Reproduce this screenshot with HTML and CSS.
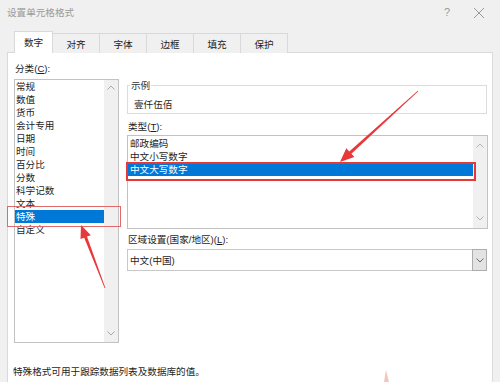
FILE: index.html
```html
<!DOCTYPE html>
<html lang="zh-CN">
<head>
<meta charset="utf-8">
<title>设置单元格格式</title>
<link rel="stylesheet" href="styles.css">
</head>
<body>
<div class="dialog">
  <div class="titlebar">
    <span class="title">设置单元格格式</span>
    <span class="tb-btns">
      <span class="help">?</span>
      <svg class="close" width="12" height="12" viewBox="0 0 12 12"><path d="M1 1L11 11M11 1L1 11" stroke="#9a9a9a" stroke-width="1" fill="none"/></svg>
    </span>
  </div>

  <div class="tabs">
    <div class="tab active">数字</div>
    <div class="tab">对齐</div>
    <div class="tab">字体</div>
    <div class="tab">边框</div>
    <div class="tab">填充</div>
    <div class="tab">保护</div>
  </div>

  <div class="panel">
    <div class="main">
      <div class="left">
        <div class="label">分类(<u>C</u>):</div>
        <div class="listbox cat-list">
          <ul class="items">
            <li>常规</li>
            <li>数值</li>
            <li>货币</li>
            <li>会计专用</li>
            <li>日期</li>
            <li>时间</li>
            <li>百分比</li>
            <li>分数</li>
            <li>科学记数</li>
            <li>文本</li>
            <li class="sel">特殊</li>
            <li>自定义</li>
          </ul>
          <div class="vscroll">
            <svg width="8" height="5" viewBox="0 0 8 5"><path d="M0.5 4.5L4 1L7.5 4.5" stroke="#a8a8a8" fill="none"/></svg>
            <svg width="8" height="5" viewBox="0 0 8 5"><path d="M0.5 0.5L4 4L7.5 0.5" stroke="#a8a8a8" fill="none"/></svg>
          </div>
        </div>
      </div>

      <div class="right">
        <fieldset class="sample">
          <legend>示例</legend>
          <div class="sample-val">壹仟伍佰</div>
        </fieldset>

        <div class="label type-label">类型(<u>T</u>):</div>
        <div class="listbox type-list">
          <ul class="items">
            <li>邮政编码</li>
            <li>中文小写数字</li>
            <li class="sel">中文大写数字</li>
          </ul>
          <div class="vscroll">
            <svg width="8" height="5" viewBox="0 0 8 5"><path d="M0.5 4.5L4 1L7.5 4.5" stroke="#b4b4b4" fill="none"/></svg>
            <svg width="8" height="5" viewBox="0 0 8 5"><path d="M0.5 0.5L4 4L7.5 0.5" stroke="#b4b4b4" fill="none"/></svg>
          </div>
        </div>

        <div class="label locale-label">区域设置(国家/地区)(<u>L</u>):</div>
        <div class="combo">
          <span class="combo-val">中文(中国)</span>
          <span class="combo-btn">
            <svg width="8" height="5" viewBox="0 0 8 5"><path d="M0.5 0.5L4 4L7.5 0.5" stroke="#6a6a6a" fill="none"/></svg>
          </span>
        </div>
      </div>
    </div>

    <p class="desc">特殊格式可用于跟踪数据列表及数据库的值。</p>
  </div>

  <div class="mark mark-cat"></div>
  <div class="mark mark-type"></div>

  <svg class="arrows" width="500" height="382" viewBox="0 0 500 382">
    <polygon fill="#e8383a" points="340,162 354.4,157 351.4,153.8 418.3,91.3 417.7,90.7 349.3,151.4 346.3,148.2"/>
    <polygon fill="#e8383a" points="81,225 90.8,235.2 87,236.6 105.4,287.9 104.6,288.1 84.2,237.7 80.5,239.1"/>
    <polygon fill="#f6c4b8" points="386,370 389,382 384,382"/>
  </svg>
</div>
</body>
</html>
```

FILE: styles.css
```css
* {
  box-sizing: border-box;
}

html, body {
  margin: 0;
  padding: 0;
}

body {
  width: 500px;
  height: 382px;
  overflow: hidden;
  background: #f0f0f0;
  font-family: "Liberation Sans", "Noto Sans CJK SC", sans-serif;
  font-size: 9.6px;
  line-height: 13px;
  color: #1e1e1e;
}

.dialog {
  position: relative;
  width: 500px;
  height: 382px;
}

/* title bar */
.titlebar {
  height: 25px;
  display: flex;
  align-items: center;
  justify-content: space-between;
  padding-left: 7px;
  padding-right: 15px;
}

.title {
  color: #9a9a9a;
}

.tb-btns {
  display: flex;
  align-items: center;
  gap: 23px;
}

.help {
  color: #9a9a9a;
  font-size: 11px;
}

.close {
  display: block;
}

/* tabs */
.tabs {
  display: flex;
  align-items: flex-end;
  height: 28px;
  padding-left: 14px;
  margin-bottom: -1px;
}

.tab {
  height: 20px;
  width: 47px;
  display: flex;
  align-items: center;
  justify-content: center;
  border-top: 1px solid #d9d9d9;
  border-right: 1px solid #d9d9d9;
  background: #f0f0f0;
  padding-top: 1px;
}

.tab.active {
  position: relative;
  z-index: 1;
  width: 39px;
  height: 22px;
  background: #fff;
  border-left: 1px solid #d9d9d9;
  padding-bottom: 1px;
}

/* panel */
.panel {
  width: 486px;
  height: 340px;
  margin-left: 7px;
  background: #fff;
  border-top: 1px solid #d9d9d9;
  border-left: 1px solid #d9d9d9;
  border-right: 1px solid #dcdcdc;
  padding: 9px 4px 0 6px;
}

.main {
  display: flex;
  gap: 8px;
}

.left {
  width: 105px;
  flex: none;
}

.label {
  height: 13px;
  margin-bottom: 4px;
  padding-left: 1px;
}

/* list boxes */
.listbox {
  display: flex;
  border: 1px solid #c2c2c2;
  background: #fff;
}

.cat-list {
  height: 264px;
}

.items {
  list-style: none;
  margin: 0;
  padding: 0;
  flex: 1;
}

.items li {
  height: 13px;
  padding-left: 1px;
  white-space: nowrap;
}

.items li.sel {
  background: #0078d7;
  color: #fff;
}

.vscroll {
  width: 14px;
  flex: none;
  background: #f0f0f0;
  display: flex;
  flex-direction: column;
  justify-content: space-between;
  align-items: center;
  padding: 5px 0 6px;
}

.vscroll svg {
  display: block;
}

/* right column */
.right {
  width: 361px;
  flex: none;
}

.sample {
  margin: 17px 1px 0 0;
  padding: 6px 6px 2px;
  border: 1px solid #dcdcdc;
  min-width: 0;
}

.sample legend {
  padding: 0 1px;
  margin-left: -4px;
  color: #333;
}

.sample-val {
  height: 13px;
}

.type-label {
  margin-top: 6px;
  margin-bottom: 2px;
}

.type-list {
  height: 94px;
}

.type-list .items {
  padding-top: 1px;
}

.type-list .items li {
  padding-left: 2px;
}

.type-list .vscroll {
  padding: 7px 0 7px;
}

.locale-label {
  margin-top: 4px;
  margin-bottom: 3px;
}

.combo {
  width: 360px;
  height: 22px;
  display: flex;
  align-items: center;
  border: 1px solid #c8c8c8;
  border-right: none;
}

.combo-val {
  flex: 1;
  padding-left: 2px;
}

.combo-btn {
  width: 15px;
  height: 22px;
  margin-top: -1px;
  margin-bottom: -1px;
  background: #e3e3e3;
  border: 1px solid #adadad;
  display: flex;
  align-items: center;
  justify-content: center;
}

.desc {
  margin: 22px 0 0 -1px;
}

/* annotation overlays */
.mark {
  position: absolute;
  pointer-events: none;
}

.mark-cat {
  left: 7px;
  top: 206px;
  width: 114px;
  height: 21px;
  border: 1px solid #e06a6a;
}

.mark-type {
  left: 126px;
  top: 162px;
  width: 350px;
  height: 19px;
  border: 2px solid #e53935;
}

.arrows {
  position: absolute;
  left: 0;
  top: 0;
  pointer-events: none;
}
```
